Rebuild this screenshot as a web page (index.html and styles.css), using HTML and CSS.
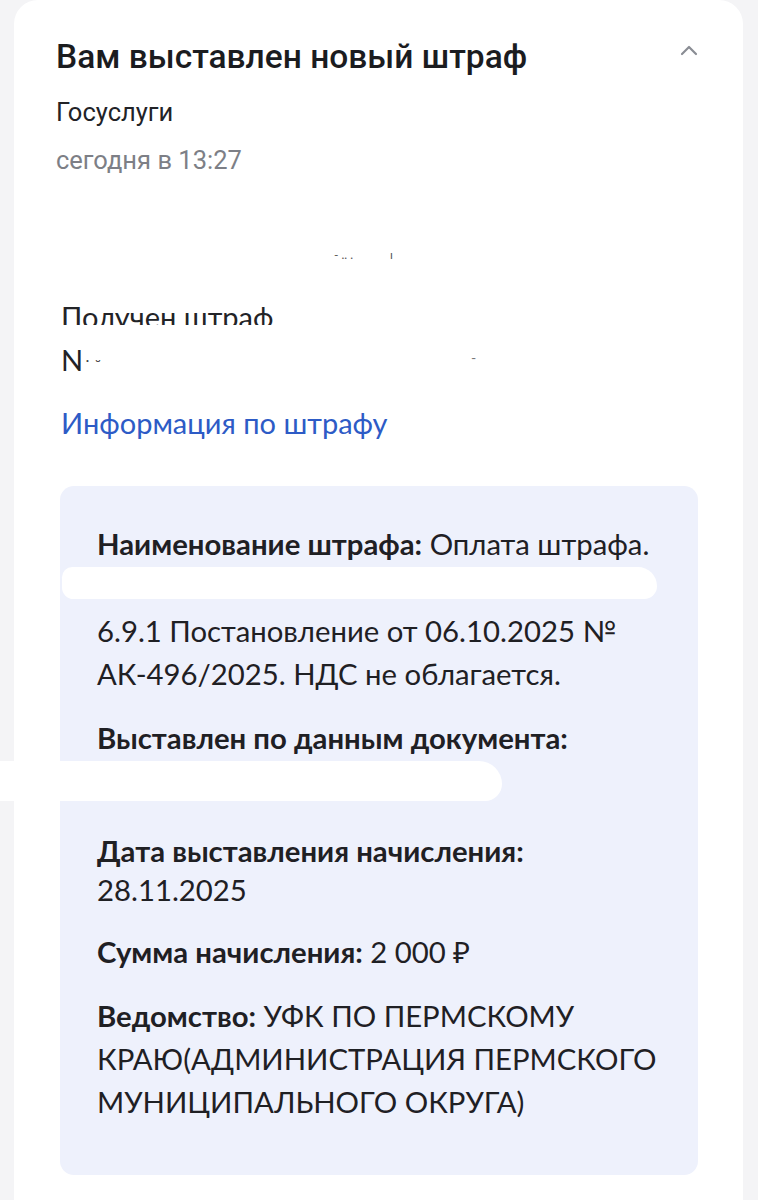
FILE: index.html
```html
<!DOCTYPE html>
<html lang="ru">
<head>
<meta charset="utf-8">
<link rel="stylesheet" href="styles.css">
</head>
<body>
<div class="card">
  <div class="head">
    <h1 class="title">Вам выставлен новый штраф</h1>
    <svg class="chev" width="20" height="12" viewBox="0 0 20 12"><path d="M3 10 L10 3 L17 10" fill="none" stroke="#8a8d94" stroke-width="2.2" stroke-linecap="round" stroke-linejoin="round"/></svg>
  </div>
  <div class="sender">Госуслуги</div>
  <div class="time">сегодня в 13:27</div>

  <div class="redact-top"><span class="specks">- .. .&nbsp;&nbsp;&nbsp;&nbsp;&nbsp;&nbsp;&nbsp;&nbsp;&nbsp;&nbsp;&nbsp;&nbsp;ı</span></div>
  <div class="clip"><span>Получен штраф</span></div>
  <div class="num">N<span class="frag">˙ ˘</span><span class="dash">-</span></div>
  <a class="link">Информация по штрафу</a>

  <div class="info">
    <p class="row"><b>Наименование штрафа:</b> Оплата штрафа.</p>
    <div class="blob blob1"></div>
    <p class="row">6.9.1 Постановление от 06.10.2025 №<br>АК-496/2025. НДС не облагается.</p>
    <p class="row gap"><b>Выставлен по данным документа:</b></p>
    <div class="blob blob2"></div>
    <p class="row tight"><b>Дата выставления начисления:</b><br>28.11.2025</p>
    <p class="row gap"><b>Сумма начисления:</b> 2 000 ₽</p>
    <p class="row gap"><b>Ведомство:</b> УФК ПО ПЕРМСКОМУ<br>КРАЮ(АДМИНИСТРАЦИЯ ПЕРМСКОГО<br>МУНИЦИПАЛЬНОГО ОКРУГА)</p>
  </div>
</div>
</body>
</html>
```
FILE: styles.css
```css
html, body { margin: 0; padding: 0; }
body {
  background: #f4f4f6;
  width: 758px;
  height: 1200px;
  overflow: hidden;
}
.card {
  margin-left: 14px;
  width: 729px;
  height: 1240px;
  background: #ffffff;
  border-radius: 24px 24px 0 0;
  padding: 37px 0 0 42px;
  box-sizing: border-box;
}
.head {
  display: flex;
  align-items: center;
  justify-content: space-between;
  padding-right: 44px;
}
.title {
  margin: 0;
  font-family: Roboto, "Noto Sans", sans-serif;
  font-weight: 500;
  font-size: 33.5px;
  line-height: 40px;
  color: #1b1c1f;
  white-space: nowrap;
}
.chev { margin-top: -14px; }
.sender {
  margin-top: 20px;
  font-family: Roboto, sans-serif;
  font-size: 25.5px;
  line-height: 30px;
  color: #222327;
}
.time {
  margin-top: 18px;
  font-family: Roboto, sans-serif;
  font-size: 25.5px;
  line-height: 30px;
  color: #7d7f86;
}
.redact-top {
  height: 124px;
  padding-left: 278px;
  font-family: Lato, sans-serif;
  font-size: 12px;
  line-height: 20px;
  color: #555;
}
.specks { display: inline-block; margin-top: 70px; }
.clip, .num, .link {
  padding-left: 5px;
  font-family: Lato, sans-serif;
  font-size: 29px;
  line-height: 36px;
  color: #222327;
}
.clip {
  height: 26px;
  overflow: hidden;
}
.num { margin-top: 15px; white-space: nowrap; }
.frag { font-size: 16px; color: #444; margin-left: 1px; }
.dash { font-size: 14px; color: #777; margin-left: 370px; vertical-align: 8px; }
.link {
  display: block;
  margin-top: 22px;
  color: #2d5bc6;
}
.info {
  margin-top: 45px;
  margin-left: 4px;
  width: 638px;
  height: 689px;
  background: #eef1fc;
  border-radius: 14px;
  padding: 36px 0 0 37px;
  box-sizing: border-box;
  font-family: Lato, sans-serif;
  font-size: 29.3px;
  line-height: 43px;
  color: #1f2024;
  white-space: nowrap;
}
.row { margin: 0; }
.row b { font-weight: 700; }
.gap { margin-top: 21px; }
.tight { line-height: 39px; margin-top: 0; }
.blob { background: #ffffff; }
.blob1 {
  height: 32px;
  margin: 2px 0 10px -35px;
  width: 595px;
  border-radius: 16px 30px 20px 18px;
}
.blob2 {
  height: 40px;
  margin: 2px 0 30px -115px;
  width: 520px;
  border-radius: 8px 30px 22px 4px;
}
```
